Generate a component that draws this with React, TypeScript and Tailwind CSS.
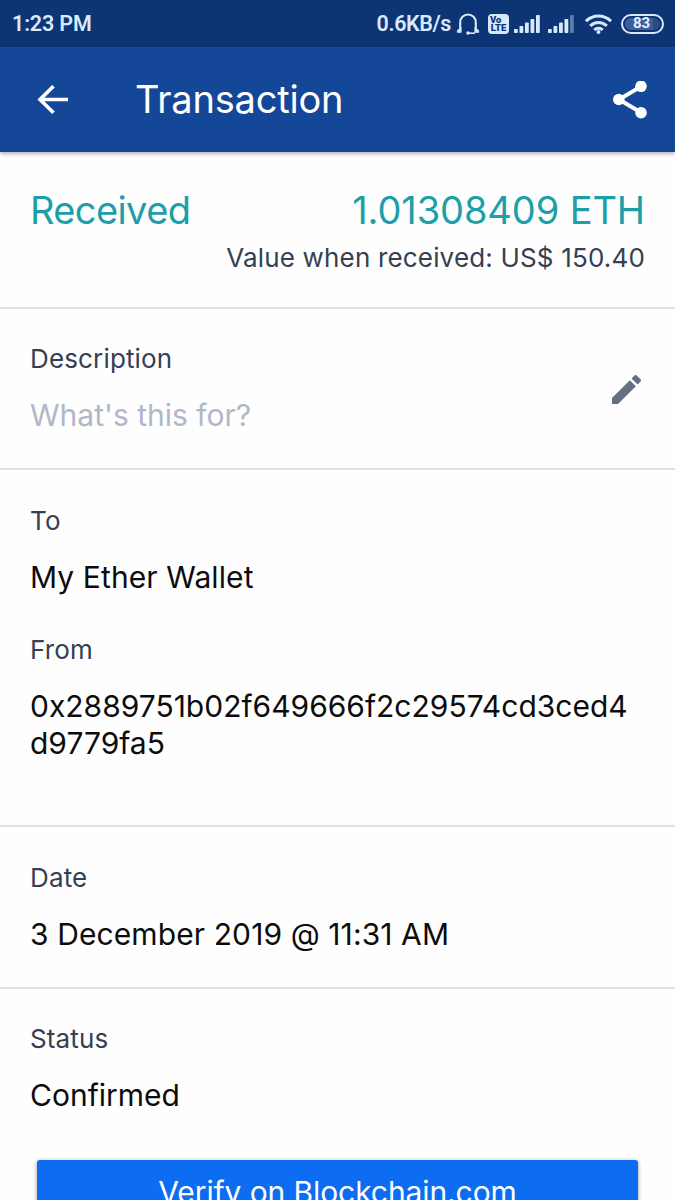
import type { ReactNode } from 'react';

interface FieldProps {
  label: string;
  children: ReactNode;
}

function Field({ label, children }: FieldProps) {
  return (
    <div>
      <p className="text-[26px] leading-8 tracking-[0.15px] text-[#354052]">{label}</p>
      <div className="mt-[22px] text-[30px] leading-[37px] text-[#0c0c0c]">{children}</div>
    </div>
  );
}

function Signal({ weak = false }: { weak?: boolean }) {
  return (
    <svg className="h-[19px] w-[26px]" viewBox="0 0 26 19" fill="currentColor">
      <rect x="0" y="15" width="3.8" height="4" rx="0.8" />
      <rect x="5.5" y="12" width="3.8" height="7" rx="0.8" />
      <rect x="11" y="8.5" width="3.8" height="10.5" rx="0.8" />
      <rect x="16.5" y="5" width="3.8" height="14" rx="0.8" />
      <rect x="22" y="1" width="3.8" height="18" rx="0.8" opacity={weak ? 0.4 : 1} />
    </svg>
  );
}

function Headphones() {
  return (
    <svg className="h-[22px] w-6" viewBox="0 0 24 22" fill="none" stroke="currentColor" strokeWidth="2.1">
      <path d="M4.2 18V9.3a7.8 7.8 0 0 1 15.6 0V18" />
      <path d="M5.2 14.5v5H1.3v-2.2zM18.8 14.5v5h3.9v-2.2z" fill="currentColor" strokeWidth="0.6" />
      <path d="M19 20.2h-7" strokeWidth="1.6" />
      <circle cx="12" cy="20" r="1.8" fill="currentColor" stroke="none" />
    </svg>
  );
}

function VolteBadge() {
  return (
    <div className="flex h-5 w-[21px] flex-col items-center justify-center rounded-[4px] bg-[#d8e9fc] text-[9.5px] leading-[8px] font-black text-[#0d3474]">
      <span className="w-[17px]">Vo</span>
      <span>LTE</span>
    </div>
  );
}

function Wifi() {
  return (
    <svg className="h-5 w-[27px]" viewBox="0 0 27 20" fill="none" stroke="currentColor" strokeWidth="3">
      <path d="M1 7.2a17.7 17.7 0 0 1 25 0" />
      <path d="M5.2 11.9a11.7 11.7 0 0 1 16.6 0" />
      <path d="M9.3 16a5.9 5.9 0 0 1 8.4 0" />
      <circle cx="13.5" cy="18" r="2" fill="currentColor" stroke="none" />
    </svg>
  );
}

function Battery() {
  return (
    <div className="flex h-5 w-[43px] rounded-full border-2 border-[#d8e9fc] p-[2px]">
      <div className="flex w-full items-center justify-center rounded-full bg-linear-to-r from-[#3d5f98] from-80% to-[#2c4b84] to-80% pr-0.5 text-[15px] leading-none font-bold text-[#e6f1ff]">83</div>
    </div>
  );
}

function StatusBar() {
  return (
    <div className="flex h-[47px] items-center justify-between bg-[#0d3474] pr-[11px] pl-3 text-[21.5px] font-semibold text-[#d8e9fc] font-[Roboto,sans-serif]">
      <span className="pt-0.5 tracking-[-0.15px]">1:23 PM</span>
      <div className="flex items-center">
        <span className="pt-0.5 tracking-[-0.4px]">0.6KB/s</span>
        <div className="ml-[5px]"><Headphones /></div>
        <div className="ml-2"><VolteBadge /></div>
        <div className="ml-[5px]"><Signal /></div>
        <div className="ml-2"><Signal weak /></div>
        <div className="ml-[11px]"><Wifi /></div>
        <div className="ml-[9px]"><Battery /></div>
      </div>
    </div>
  );
}

export default function App() {
  return (
    <div className="h-[1200px] w-[675px] overflow-hidden bg-[#fefefe] font-[Inter,sans-serif]">
      <StatusBar />
      <header className="flex h-[105px] items-center bg-[#144798] pr-7 pl-[37px] text-white shadow-[0_2px_4px_rgba(0,0,0,0.3)]">
        <svg className="h-[30px] w-[31px]" viewBox="0 0 31 30" fill="none" stroke="currentColor" strokeWidth="3.6">
          <path d="M31 14.5H3M16.5 1.2L3 14.5l13.5 13.3" />
        </svg>
        <h1 className="ml-[67px] flex-1 text-[38px] tracking-[-0.2px]">Transaction</h1>
        <svg className="h-[38px] w-[34px]" viewBox="0 0 34 38" fill="currentColor">
          <path d="M28 5.5L6 18.5l22 13" fill="none" stroke="currentColor" strokeWidth="4" />
          <circle cx="28" cy="5.3" r="5.8" />
          <circle cx="5.8" cy="18.5" r="5.8" />
          <circle cx="28" cy="31.7" r="5.8" />
        </svg>
      </header>
      <section className="h-[157px] border-b-2 border-[#dfe0e2] px-[30px] pt-[34px]">
        <div className="flex justify-between text-[38px] leading-[48px] text-[#1c9fa8]">
          <span className="tracking-[-0.6px]">Received</span>
          <span className="tracking-[-0.1px]">1.01308409 ETH</span>
        </div>
        <p className="mt-2 text-right text-[26px] leading-8 tracking-[0.17px] text-[#354052]">Value when received: US$ 150.40</p>
      </section>
      <section className="flex h-[161px] justify-between border-b-2 border-[#dfe0e2] pt-[34px] pr-[34px] pl-[30px]">
        <Field label="Description">
          <span className="text-[#b0b8c8]">What's this for?</span>
        </Field>
        <svg className="mt-8 h-[29px] w-[29px]" viewBox="3 3 18 18" fill="#667083">
          <path d="M3 17.25V21h3.75L17.81 9.94l-3.75-3.75L3 17.25zM20.71 7.04a1 1 0 0 0 0-1.41l-2.34-2.34a1 1 0 0 0-1.41 0l-1.83 1.83 3.75 3.75 1.83-1.83z" />
        </svg>
      </section>
      <section className="h-[357px] border-b-2 border-[#dfe0e2] px-[30px] pt-[35px]">
        <Field label="To">
          <span className="tracking-[0.1px]">My Ether Wallet</span>
        </Field>
        <div className="mt-[38px]">
          <Field label="From">0x2889751b02f649666f2c29574cd3ced4<br />d9779fa5</Field>
        </div>
      </section>
      <section className="h-[162px] border-b-2 border-[#dfe0e2] px-[30px] pt-[35px]">
        <Field label="Date">
          <span className="tracking-[0.1px]">3 December 2019 @ 11:31 AM</span>
        </Field>
      </section>
      <section className="px-[30px] pt-[34px]">
        <Field label="Status">Confirmed</Field>
        <button className="mx-[7px] mt-[46px] flex h-20 w-[601px] justify-center rounded-[3px] bg-[#0c6cf2] pt-[14px] text-[30px] leading-9 tracking-[-0.1px] text-white shadow-[0_1px_4px_rgba(0,0,0,0.4)]">
          Verify on Blockchain.com
        </button>
      </section>
    </div>
  );
}
